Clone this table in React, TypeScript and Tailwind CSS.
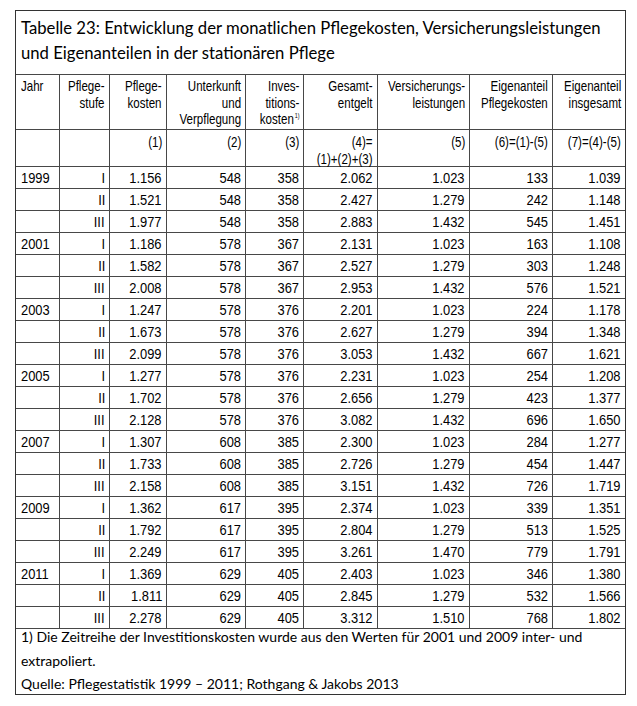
const rows: string[][] = [
  ['1999', 'I', '1.156', '548', '358', '2.062', '1.023', '133', '1.039'],
  ['', 'II', '1.521', '548', '358', '2.427', '1.279', '242', '1.148'],
  ['', 'III', '1.977', '548', '358', '2.883', '1.432', '545', '1.451'],
  ['2001', 'I', '1.186', '578', '367', '2.131', '1.023', '163', '1.108'],
  ['', 'II', '1.582', '578', '367', '2.527', '1.279', '303', '1.248'],
  ['', 'III', '2.008', '578', '367', '2.953', '1.432', '576', '1.521'],
  ['2003', 'I', '1.247', '578', '376', '2.201', '1.023', '224', '1.178'],
  ['', 'II', '1.673', '578', '376', '2.627', '1.279', '394', '1.348'],
  ['', 'III', '2.099', '578', '376', '3.053', '1.432', '667', '1.621'],
  ['2005', 'I', '1.277', '578', '376', '2.231', '1.023', '254', '1.208'],
  ['', 'II', '1.702', '578', '376', '2.656', '1.279', '423', '1.377'],
  ['', 'III', '2.128', '578', '376', '3.082', '1.432', '696', '1.650'],
  ['2007', 'I', '1.307', '608', '385', '2.300', '1.023', '284', '1.277'],
  ['', 'II', '1.733', '608', '385', '2.726', '1.279', '454', '1.447'],
  ['', 'III', '2.158', '608', '385', '3.151', '1.432', '726', '1.719'],
  ['2009', 'I', '1.362', '617', '395', '2.374', '1.023', '339', '1.351'],
  ['', 'II', '1.792', '617', '395', '2.804', '1.279', '513', '1.525'],
  ['', 'III', '2.249', '617', '395', '3.261', '1.470', '779', '1.791'],
  ['2011', 'I', '1.369', '629', '405', '2.403', '1.023', '346', '1.380'],
  ['', 'II', '1.811', '629', '405', '2.845', '1.279', '532', '1.566'],
  ['', 'III', '2.278', '629', '405', '3.312', '1.510', '768', '1.802'],
];

const header: React.ReactNode[] = [
  'Jahr',
  <>Pflege-<br />stufe</>,
  <>Pflege-<br />kosten</>,
  <>Unterkunft<br />und<br />Verpflegung</>,
  <>Inves-<br />titions-<br />kosten<sup className="text-[7px] leading-none align-[3px] ml-[1px]">1)</sup></>,
  <>Gesamt-<br />entgelt</>,
  <>Versicherungs-<br />leistungen</>,
  <>Eigenanteil<br />Pflegekosten</>,
  <>Eigenanteil<br />insgesamt</>,
];

const refs: React.ReactNode[] = [
  '',
  '',
  '(1)',
  '(2)',
  '(3)',
  <>(4)=<br />(1)+(2)+(3)</>,
  '(5)',
  '(6)=(1)-(5)',
  '(7)=(4)-(5)',
];

const grid = 'grid grid-cols-[44px_50px_57px_79px_58px_74px_92px_83px_72px]';
const line = 'border-[#474747]';
const cellFont = { fontFamily: '"Liberation Sans", Arial, sans-serif' };
const titleFont = { fontFamily: 'Lato, "Open Sans", sans-serif' };

// condensed look: Arial Narrow is not around, so squeeze Liberation Sans
function Narrow({ children, left, tight }: { children: React.ReactNode; left?: boolean; tight?: boolean }) {
  return (
    <span
      className={`inline-block whitespace-nowrap ${left ? 'origin-left text-left' : 'origin-right text-right'} ${
        tight ? 'scale-x-[0.77]' : 'scale-x-[0.86]'
      }`}
    >
      {children}
    </span>
  );
}

function Cell({ children, first, top, tight }: { children: React.ReactNode; first?: boolean; top?: string; tight?: boolean }) {
  return (
    <div
      className={`flex border-r ${line} last:border-r-0 ${first ? 'justify-start pl-[5px]' : 'justify-end pr-[4px]'} ${
        top ?? 'items-center'
      }`}
    >
      <Narrow left={first} tight={tight}>
        {children}
      </Narrow>
    </div>
  );
}

export default function App() {
  return (
    <div className="bg-white w-[637px] h-[706px] pt-[10px] pl-[15px]">
      <div className="w-[611px] border border-[#333]">
        <div
          className={`h-[64px] border-b ${line} px-[5px] pt-[5px] text-[16.7px] leading-[25px] text-black`}
          style={titleFont}
        >
          Tabelle 23: Entwicklung der monatlichen Pflegekosten, Versicherungsleistungen
          <br />
          und Eigenanteilen in der stationären Pflege
        </div>

        <div className={`${grid} h-[55px] border-b ${line} text-[15px] leading-[16.5px] text-black`} style={cellFont}>
          {header.map((h, i) => (
            <Cell key={i} first={i === 0} top="items-start pt-[3px]" tight>
              {h}
            </Cell>
          ))}
        </div>

        <div className={`${grid} h-[37px] border-b ${line} text-[15px] leading-[16.5px] text-black`} style={cellFont}>
          {refs.map((h, i) => (
            <Cell key={i} top="items-start pt-[4px]" tight>
              {h}
            </Cell>
          ))}
        </div>

        {rows.map((r, ri) => (
          <div
            key={ri}
            className={`${grid} h-[22px] border-b ${line} text-[15px] leading-[21px] text-black`}
            style={cellFont}
          >
            {r.map((v, i) => (
              <Cell key={i} first={i === 0}>
                {v}
              </Cell>
            ))}
          </div>
        ))}

        <div
          className="h-[65px] px-[5px] flex flex-col gap-[7.5px] text-[14px] leading-[16px] text-black"
          style={titleFont}
        >
          <div className="whitespace-nowrap">
            1) Die Zeitreihe der Investitionskosten wurde aus den Werten für 2001 und 2009 inter- und
          </div>
          <div>extrapoliert.</div>
          <div>Quelle: Pflegestatistik 1999 – 2011; Rothgang &amp; Jakobs 2013</div>
        </div>
      </div>
    </div>
  );
}
